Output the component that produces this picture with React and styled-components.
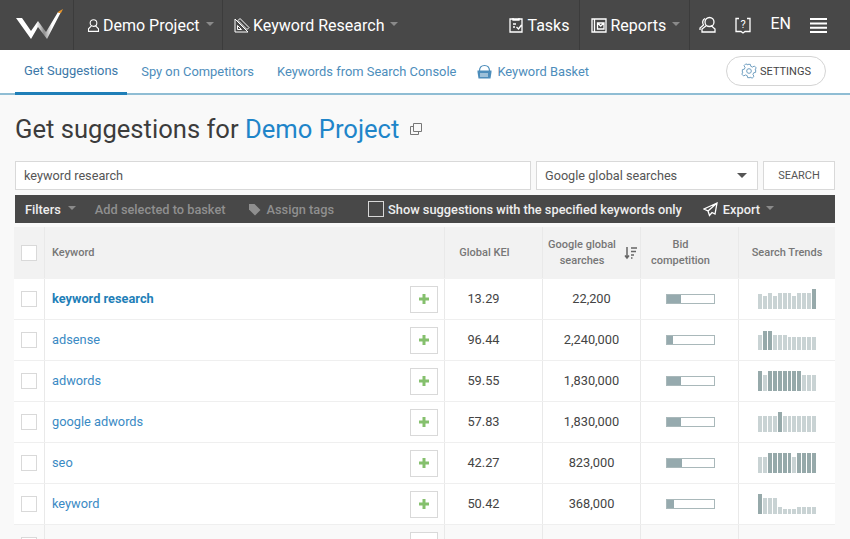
import styled, { createGlobalStyle } from "styled-components";

const GlobalStyle = createGlobalStyle`
  html, body {
    margin: 0;
    height: 100%;
    overflow: hidden;
    background: #f9f9f9;
    font-family: Roboto, "Liberation Sans", sans-serif;
  }
  * { box-sizing: border-box; }
`;

const Page = styled.div`
  width: 850px;
  height: 539px;
  overflow: hidden;
`;

const TopBar = styled.header`
  height: 50px;
  background: #484848;
  display: flex;
  align-items: stretch;
  color: #fff;
`;

const LogoBox = styled.div`
  width: 74px;
  display: flex;
  align-items: center;
  padding-left: 14px;
  border-right: 1px solid #3c3c3c;
`;

const NavItem = styled.div`
  display: flex;
  align-items: center;
  gap: 2px;
  padding: 0 ${(p) => p.$right || 0}px 0 ${(p) => p.$left || 10}px;
  width: ${(p) => (p.$width ? `${p.$width}px` : "auto")};
  font-size: 16px;
  white-space: nowrap;
  border-right: ${(p) => (p.$noLine ? "none" : "1px solid #3c3c3c")};
  margin-left: ${(p) => p.$push || 0};
`;

const Caret = styled.span`
  display: inline-block;
  width: 0;
  height: 0;
  margin-left: ${(p) => p.$left || 4}px;
  margin-top: -3px;
  border-left: 4px solid transparent;
  border-right: 4px solid transparent;
  border-top: 4px solid ${(p) => p.$color || "#8a8a8a"};
`;

const NavIcons = styled.div`
  display: flex;
  align-items: center;
  padding: 0 23px 0 9px;
  gap: 17px;
`;

const Lang = styled.span`
  font-size: 16px;
  margin: -4px 2px 0 1px;
`;

const SubBar = styled.nav`
  height: 45px;
  background: #fff;
  border-bottom: 2px solid #8fbdd4;
  display: flex;
  align-items: stretch;
  padding: 0 24px 0 15px;
  gap: 5px;
`;

const Tab = styled.a`
  display: flex;
  align-items: center;
  gap: 5px;
  height: 45px;
  padding: 0 9px 2px;
  font-size: 12.9px;
  color: ${(p) => (p.$active ? "#3c78a8" : "#4d8dbb")};
  border-bottom: ${(p) => (p.$active ? "3px solid #1f7fb8" : "none")};
`;

const BasketTab = styled(Tab)`
  margin-left: -2px;
`;

const SettingsButton = styled.button`
  margin: 6px 0 0 auto;
  width: 100px;
  height: 30px;
  border: 1px solid #d4d4d4;
  border-radius: 15px;
  background: #fff;
  color: #444;
  font: 11px Roboto, sans-serif;
  display: flex;
  align-items: center;
  justify-content: center;
  gap: 3px;
`;

const Content = styled.main`
  padding: 0 15px 0 15px;
`;

const Heading = styled.h1`
  margin: 0;
  height: 66px;
  display: flex;
  align-items: center;
  padding-top: 2px;
  font-size: 25.6px;
  font-weight: 400;
  color: #3c3c3c;
  white-space: pre;
`;

const ProjectLink = styled.span`
  color: #1f85c9;
`;

const SearchRow = styled.div`
  display: flex;
  gap: 5px;
  height: 29px;
`;

const Field = styled.div`
  width: ${(p) => p.$width}px;
  background: #fff;
  border: 1px solid #d9d9d9;
  display: flex;
  align-items: center;
  padding: 0 8px;
  font-size: 12.7px;
  color: #555;
`;

const SelectCaret = styled(Caret)`
  margin-left: auto;
  margin-right: 2px;
  margin-top: 0;
  border-left-width: 5px;
  border-right-width: 5px;
  border-top: 5px solid #555;
`;

const SearchButton = styled.button`
  width: 72px;
  background: #fff;
  border: 1px solid #d9d9d9;
  color: #555;
  font: 11px Roboto, sans-serif;
`;

const Toolbar = styled.div`
  margin-top: 5px;
  height: 28px;
  background: #484848;
  display: flex;
  align-items: center;
  padding-left: 10px;
  font-size: 12.8px;
  font-weight: 500;
  color: #eee;
`;

const ToolItem = styled.span`
  display: flex;
  align-items: center;
  gap: ${(p) => p.$gap || 4}px;
  margin-left: ${(p) => p.$left || 0}px;
  color: ${(p) => (p.$muted ? "#8f8f8f" : "#eee")};
`;

const ToolCheck = styled.span`
  width: 16px;
  height: 16px;
  border: 1px solid #d8d8d8;
  background: #484848;
`;

const Table = styled.div`
  margin: 4px 0 0 -1px;
  width: 821px;
  background: #fff;
`;

const Row = styled.div`
  display: grid;
  grid-template-columns: 31px 400px 98px 98px 98px 96px;
  height: ${(p) => (p.$head ? 52 : 41)}px;
  background: ${(p) => (p.$head ? "#f2f2f2" : p.$fade ? "#f9f9f9" : "#fff")};
  border-bottom: 1px solid ${(p) => (p.$head ? "#f2f2f2" : "#efefef")};
`;

const Cell = styled.div`
  display: flex;
  align-items: center;
  justify-content: ${(p) => (p.$left ? "flex-start" : "center")};
  padding: ${(p) => (p.$left ? "0 6px 0 7px" : `0 ${p.$shift || 0}px 0 0`)};
  border-right: ${(p) => (p.$last ? "none" : "1px solid #e9e9e9")};
  font-size: 12.8px;
  color: #444;
`;

const NumberCell = styled(Cell)`
  padding-bottom: 2px;
`;

const HeadCell = styled(Cell)`
  padding-top: 1px;
  font-size: 11px;
  font-weight: 500;
  line-height: 16px;
  text-align: center;
  color: #777;
`;

const Box = styled.span`
  width: 16px;
  height: 16px;
  border: 1px solid #d9d9d9;
  background: #fff;
`;

const KeywordLink = styled.a`
  font-size: 12.8px;
  margin-bottom: 2px;
  color: ${(p) => (p.$bold ? "#1f7fb8" : "#3a8ac4")};
  font-weight: ${(p) => (p.$bold ? 700 : 400)};
`;

const AddButton = styled.span`
  margin-left: auto;
  width: 28px;
  height: 27px;
  background: #fff;
  border: 1px solid #d9d9d9;
  display: flex;
  align-items: center;
  justify-content: center;
`;

const SortGroup = styled.div`
  display: flex;
  align-items: center;
  gap: 8px;
  padding-left: 2px;
`;

const BidTrack = styled.div`
  width: 49px;
  height: 10px;
  margin-left: 2px;
  border: 1px solid #a9b8ba;
  background: #fff;
`;

const BidFill = styled.div`
  height: 100%;
  background: #96aaae;
`;

const Bars = styled.div`
  width: 58px;
  height: 20px;
  display: flex;
  align-items: flex-end;
  gap: 1px;
`;

const Bar = styled.span`
  flex: 1;
  background: ${(p) => (p.$dark ? "#96a9aa" : "#c9d3d4")};
`;

const Logo = () => (
  <svg width="50" height="32" viewBox="0 0 50 32">
    <defs>
      <linearGradient id="wg" x1="0" x2="1" y1="0" y2="0">
        <stop offset="0" stopColor="#fff" />
        <stop offset="0.45" stopColor="#fff" />
        <stop offset="0.62" stopColor="#8c8c8c" />
        <stop offset="0.8" stopColor="#fff" />
      </linearGradient>
    </defs>
    <path d="M2 9h6l9 13 7-10 8 11L44 3h3L33 30 24 18 17 30z" fill="url(#wg)" />
    <path d="M44.500 2.500 49 0l-2 4h-3z" fill="#e8962e" />
  </svg>
);

const LineIcon = ({ size = 18, children, color = "#fff", width = 1.3 }) => (
  <svg width={size} height={size} viewBox="0 0 18 18" fill="none" stroke={color} strokeWidth={width}>
    {children}
  </svg>
);

const rows = [
  { k: "keyword research", kei: "13.29", vol: "22,200", bid: 14, bold: true,
    h: [15, 13, 16, 13, 16, 16, 16, 13, 16, 16, 16, 20], d: [11] },
  { k: "adsense", kei: "96.44", vol: "2,240,000", bid: 6,
    h: [15, 19, 19, 15, 15, 15, 13, 13, 13, 13, 13, 13], d: [1, 2] },
  { k: "adwords", kei: "59.55", vol: "1,830,000", bid: 14,
    h: [20, 16, 20, 20, 20, 20, 20, 20, 20, 16, 16, 16], d: [0, 2, 3, 4, 5, 6, 7, 8] },
  { k: "google adwords", kei: "57.83", vol: "1,830,000", bid: 14,
    h: [16, 16, 16, 16, 20, 16, 16, 16, 16, 16, 16, 16], d: [4] },
  { k: "seo", kei: "42.27", vol: "823,000", bid: 15,
    h: [16, 16, 20, 20, 20, 20, 20, 16, 20, 20, 20, 20], d: [2, 3, 4, 5, 6, 8, 9, 10, 11] },
  { k: "keyword", kei: "50.42", vol: "368,000", bid: 7,
    h: [20, 16, 16, 16, 7, 5, 5, 5, 7, 7, 7, 7], d: [0] },
];

function DataRow({ row }) {
  return (
    <Row>
      <Cell><Box /></Cell>
      <Cell $left>
        <KeywordLink $bold={row.bold}>{row.k}</KeywordLink>
        <AddButton>
          <svg width="12" height="12" viewBox="0 0 12 12">
            <path d="M4.500 1h3v3.500H11v3H7.500V11h-3V7.500H1v-3h3.500z" fill="#85c06d" />
          </svg>
        </AddButton>
      </Cell>
      <NumberCell $shift={20}>{row.kei}</NumberCell>
      <NumberCell>{row.vol}</NumberCell>
      <Cell>
        <BidTrack><BidFill style={{ width: row.bid }} /></BidTrack>
      </Cell>
      <Cell $last>
        <Bars>
          {row.h.map((h, i) => (
            <Bar key={i} $dark={row.d.includes(i)} style={{ height: h }} />
          ))}
        </Bars>
      </Cell>
    </Row>
  );
}

export default function App() {
  return (
    <Page>
      <GlobalStyle />
      <TopBar>
        <LogoBox><Logo /></LogoBox>
        <NavItem $width={149} $left={12}>
          <LineIcon size={15}>
            <circle cx="9" cy="6" r="4" />
            <path d="M6.500 9.500 3 13v3h12v-3l-3.500-3.500" />
          </LineIcon>
          Demo Project
          <Caret />
        </NavItem>
        <NavItem $noLine>
          <LineIcon size={18} width={1}>
            <path d="M2 3v13h13zM4.500 9.500v4h4zM7 2.500l9 9-2 2-9-9z" />
          </LineIcon>
          Keyword Research
          <Caret />
        </NavItem>
        <NavItem $push="auto" $right={10}>
          <LineIcon size={18}>
            <path d="M3 3h12v13H3zM6 2v2h6V2M6 8h3M6 11h2M9.500 11l2 2 3-4" />
          </LineIcon>
          Tasks
        </NavItem>
        <NavItem $width={110}>
          <LineIcon size={18}>
            <path d="M2 3h14v13H2zM4.500 3v13M7.500 7h6.500v6H7.500zM7.500 7l3.200 3 3.300-3" />
          </LineIcon>
          Reports
          <Caret />
        </NavItem>
        <NavIcons>
          <LineIcon size={18}>
            <circle cx="10.500" cy="6" r="4.500" />
            <path d="M7.500 9.500 3 13v3h13v-3l-4-3.500M6 2.500C3.500 3.500 3 7 4.500 9L1 12v2" />
          </LineIcon>
          <LineIcon size={18}>
            <path d="M5 2.500H2v13h5l2 1.500 2-1.500h5v-13h-3" />
            <text x="9" y="12" fontSize="11" textAnchor="middle" fill="#fff" stroke="none" fontFamily="Roboto">?</text>
          </LineIcon>
          <Lang>EN</Lang>
          <svg width="17" height="15" viewBox="0 0 17 15">
            <path d="M0 1h17M0 5.500h17M0 9.800h17M0 14h17" stroke="#fff" strokeWidth="2" />
          </svg>
        </NavIcons>
      </TopBar>

      <SubBar>
        <Tab $active>Get Suggestions</Tab>
        <Tab>Spy on Competitors</Tab>
        <Tab>Keywords from Search Console</Tab>
        <BasketTab>
          <svg width="15" height="15" viewBox="0 0 15 15">
            <path d="M2.500 7C2.500 3 5 1.500 7.500 1.500S12.500 3 12.500 7" fill="none" stroke="#4d8dbb" strokeWidth="1.200" />
            <path d="M0.500 6.500h14v1.500l-1 6.500H1.500L.5 8z" fill="#4d8dbb" />
            <path d="M4 9v4M6 9v4M8 9v4M10 9v4" stroke="#fff" strokeWidth="0.900" />
          </svg>
          Keyword Basket
        </BasketTab>
        <SettingsButton>
          <svg width="16" height="16" viewBox="0 0 24 24" fill="none" stroke="#6f9ec0" strokeWidth="1.500">
            <path d="M10 2h4l.7 3 2.600 1.100 2.700-1.600 2.800 2.800-1.600 2.700L22 10v4l-3 .7-1.100 2.600 1.600 2.700-2.800 2.800-2.700-1.600L14 22h-4l-.7-3-2.600-1.100L4 19.500 1.200 16.700l1.600-2.700L2 14v-4l3-.7 1.100-2.600L4.500 4 7.300 1.200 10 2.800z" />
            <circle cx="12" cy="12" r="3.500" />
          </svg>
          SETTINGS
        </SettingsButton>
      </SubBar>

      <Content>
        <Heading>
          Get suggestions for <ProjectLink>Demo Project</ProjectLink>
          <svg width="14" height="14" viewBox="0 0 14 14" fill="none" stroke="#777" style={{ marginLeft: 10 }}>
            <path d="M4.500 1.500h8v8h-8zM4.500 4.500h-3v8h8v-3" />
          </svg>
        </Heading>
        <SearchRow>
          <Field $width={516}>keyword research</Field>
          <Field $width={222}>
            Google global searches
            <SelectCaret />
          </Field>
          <SearchButton>SEARCH</SearchButton>
        </SearchRow>

        <Toolbar>
          <ToolItem>Filters<Caret $left={3} /></ToolItem>
          <ToolItem $muted $left={19}>Add selected to basket</ToolItem>
          <ToolItem $muted $left={22} $gap={6}>
            <svg width="13" height="13" viewBox="0 0 13 13">
              <path d="M1 1h5.500L12.500 7l-5.500 5.500L1 6.500z" fill="#8f8f8f" />
            </svg>
            Assign tags
          </ToolItem>
          <ToolItem $left={34}><ToolCheck />Show suggestions with the specified keywords only</ToolItem>
          <ToolItem $left={21} $gap={5}>
            <svg width="15" height="15" viewBox="0 0 15 15" fill="none" stroke="#fff" strokeWidth="1.300">
              <path d="M14 1 1 7l4 2 1.500 4.500L9 10.500l3 1.500zM14 1 5 9" />
            </svg>
            Export
            <Caret $left={1} />
          </ToolItem>
        </Toolbar>

        <Table>
          <Row $head>
            <HeadCell><Box /></HeadCell>
            <HeadCell $left>Keyword</HeadCell>
            <HeadCell $shift={18}>Global KEI</HeadCell>
            <HeadCell>
              <SortGroup>
                <span>Google global<br />searches</span>
                <svg width="13" height="14" viewBox="0 0 13 14" fill="none" stroke="#666" strokeWidth="1.500">
                  <path d="M3 1v11M1 9.500 3 12l2-2.500M7 2h6M7 5.500h5M7 9h3M7 12h1.500" />
                </svg>
              </SortGroup>
            </HeadCell>
            <HeadCell $shift={18}>Bid<br />competition</HeadCell>
            <HeadCell $last>Search Trends</HeadCell>
          </Row>
          {rows.map((row) => (
            <DataRow key={row.k} row={row} />
          ))}
          <Row $fade>
            <Cell><Box /></Cell>
            <Cell $left><AddButton /></Cell>
            <Cell />
            <Cell />
            <Cell />
            <Cell $last />
          </Row>
        </Table>
      </Content>
    </Page>
  );
}
